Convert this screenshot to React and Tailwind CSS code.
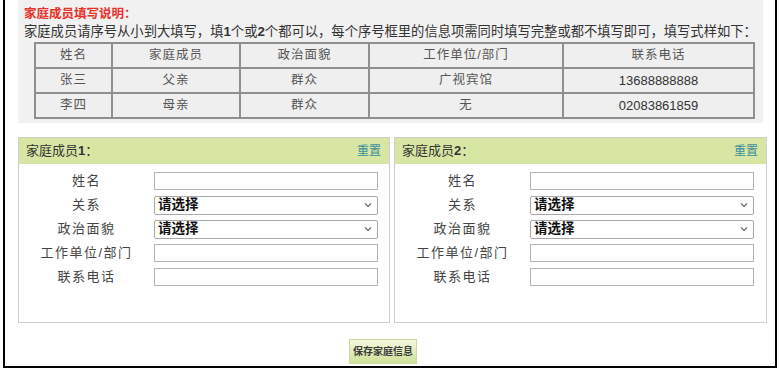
import React from 'react';

const sample = [
  ['张三', '父亲', '群众', '广视宾馆', '13688888888'],
  ['李四', '母亲', '群众', '无', '02083861859'],
];

const cols = ['w-[77px]', 'w-[128px]', 'w-[129px]', 'w-[194px]', 'w-[191px]'];

const Field = ({ label, select }) => (
  <div className="flex items-center h-[24px]">
    <div className="w-[135px] text-center text-[13px] text-[#444] tracking-[1.5px]">{label}</div>
    {select ? (
      <div className="w-[224px] h-[19px] border border-[#a9a9a9] rounded-[2px] bg-white flex items-center justify-between px-[3px]">
        <span className="text-[13.5px] font-bold text-[#111] leading-none">请选择</span>
        <svg width="8" height="6" viewBox="0 0 8 6" className="mr-[2px]">
          <path d="M1 1.5 L4 4.5 L7 1.5" fill="none" stroke="#666" strokeWidth="1.2" />
        </svg>
      </div>
    ) : (
      <div className="w-[224px] h-[18px] border border-[#b5b5b5] bg-white" />
    )}
  </div>
);

const Member = ({ n, w }) => (
  <div className={`${w} h-[186px] border border-[#cfcfcf] bg-white`}>
    <div className="h-[26px] bg-[#d8e6a4] flex items-center justify-between pl-[7px] pr-[8px]">
      <span className="text-[13px] text-[#333]">
        家庭成员<span className="font-bold font-['Liberation_Sans']">{n}</span>：
      </span>
      <span className="text-[12px] text-[#3a8f9e]">重置</span>
    </div>
    <div className="pt-[5px]">
      <Field label="姓名" />
      <Field label="关系" select />
      <Field label="政治面貌" select />
      <Field label="工作单位/部门" />
      <Field label="联系电话" />
    </div>
  </div>
);

export default function App() {
  return (
    <div className="w-[780px] h-[372px] bg-white overflow-hidden font-['Liberation_Sans','Noto_Sans_CJK_SC',sans-serif]">
      <div className="ml-[3px] w-[774px] h-[368px] border-x-2 border-b-2 border-black">
        <div className="ml-[13px] w-[745px] h-[123px] bg-[#f1f1f1] pt-[6px] pl-[6px]">
          <div className="text-[12.5px] font-bold text-[#e8322c] leading-[16px]">家庭成员填写说明：</div>
          <div className="text-[13.3px] text-[#333] leading-[18px] mt-[1px] whitespace-nowrap">
            家庭成员请序号从小到大填写，填<b className="font-['Liberation_Sans']">1</b>个或<b className="font-['Liberation_Sans']">2</b>个都可以，每个序号框里的信息项需同时填写完整或都不填写即可，填写式样如下：
          </div>
          <table className="ml-[10px] mt-[1px] border-collapse border-2 border-[#8a8a8a] text-[12.5px] text-[#555]">
            <tbody>
              <tr className="h-[25px]">
                {['姓名', '家庭成员', '政治面貌', '工作单位/部门', '联系电话'].map((h, i) => (
                  <td key={i} className={`${cols[i]} border-2 border-[#8f8f8f] bg-[#efefef] text-center tracking-[1px]`}>{h}</td>
                ))}
              </tr>
              {sample.map((r, ri) => (
                <tr key={ri} className="h-[25px]">
                  {r.map((c, i) => (
                    <td
                      key={i}
                      className={`${cols[i]} border-2 border-[#8f8f8f] bg-[#efefef] text-center ${i === 4 ? "text-[13px] text-[#333] font-['Liberation_Sans']" : 'tracking-[1px]'}`}
                    >
                      {c}
                    </td>
                  ))}
                </tr>
              ))}
            </tbody>
          </table>
        </div>
        <div className="flex ml-[13px] mt-[14px] gap-[4px]">
          <Member n="1" w="w-[372px]" />
          <Member n="2" w="w-[373px]" />
        </div>
        <div className="flex justify-center pr-[14px] mt-[16px]">
          <button className="w-[68px] h-[25px] border border-[#c9d9a2] bg-gradient-to-b from-[#f3f8de] to-[#cfe197] text-[10px] font-bold text-[#3b3b3b]">
            保存家庭信息
          </button>
        </div>
      </div>
    </div>
  );
}
